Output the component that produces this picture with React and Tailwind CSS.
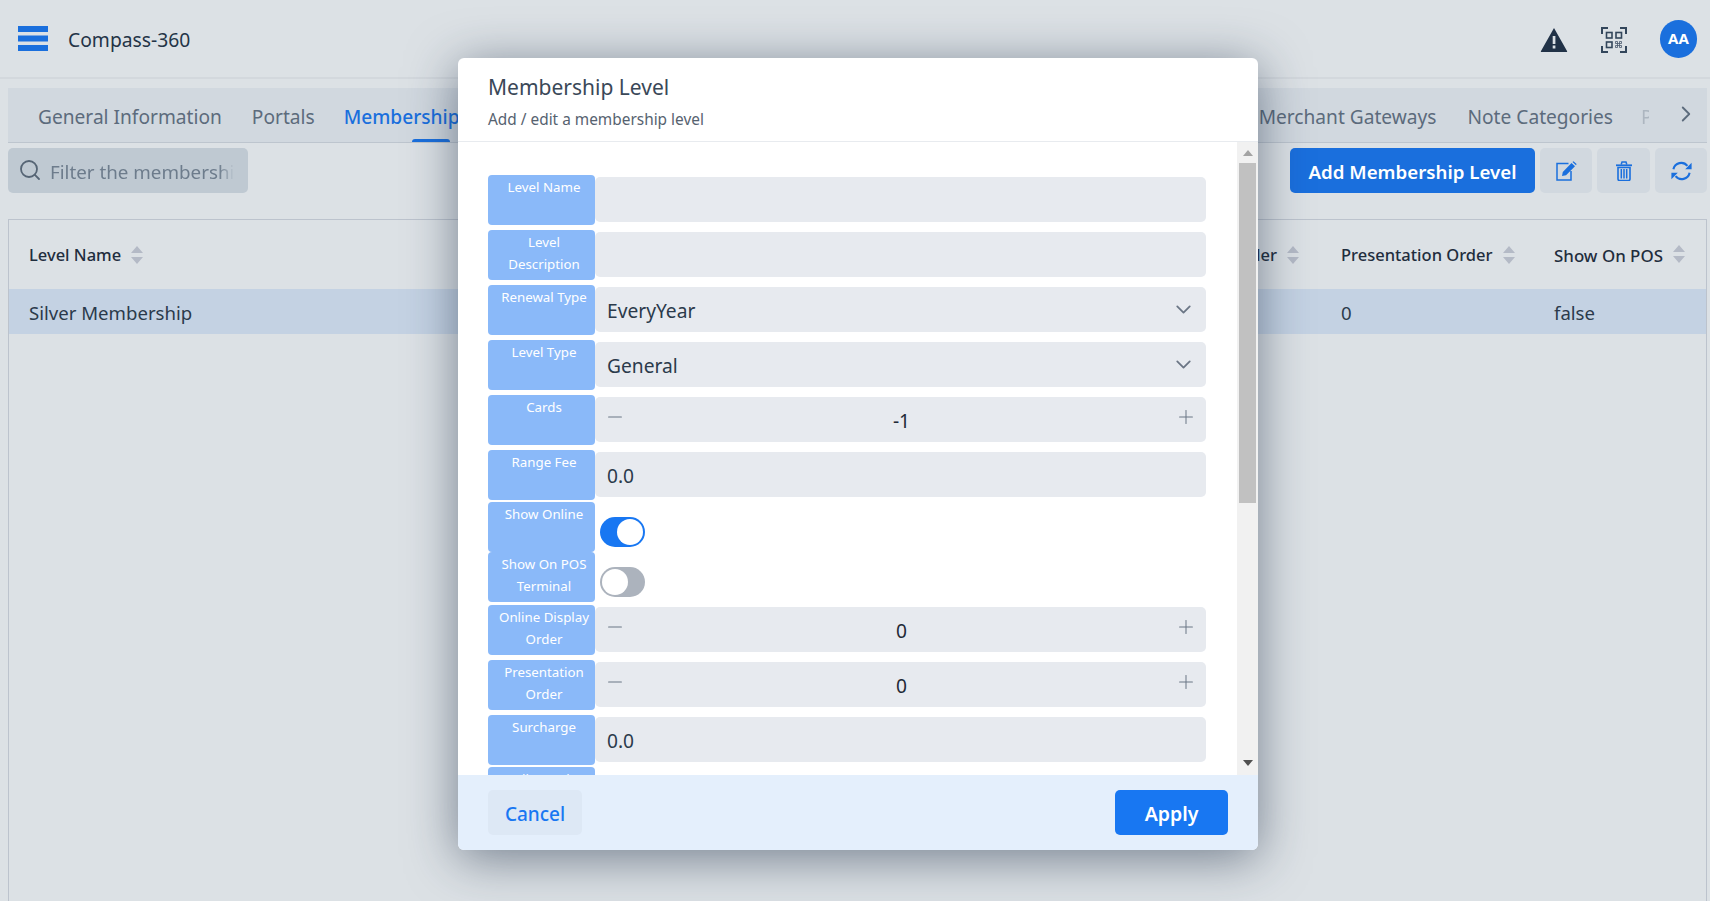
import React from "react";
import { ChevronDown, ChevronRight, Search, Minus, Plus } from "lucide-react";

function Sort() {
  return (
    <svg width="12" height="18" viewBox="0 0 12 18" className="ml-[10px] shrink-0">
      <path d="M6 0 L12 7 H0 Z M6 18 L0 11 H12 Z" fill="#b4bac6" />
    </svg>
  );
}

function Label({ children }) {
  return (
    <div className="w-[107px] h-[50px] shrink-0 rounded-[4px] bg-[#8ab9f9] text-white text-[13.3px] leading-[22px] pl-[5px] pt-[1px] text-center">
      {children}
    </div>
  );
}

function Field({ children }) {
  return (
    <div className="flex-1 h-[45px] mt-[2px] rounded-[5px] bg-[#e7eaef] flex items-center px-3 pt-[4px] text-[19.2px] text-[#2b3a4b]">
      {children}
    </div>
  );
}

function Row({ label, children }) {
  return (
    <div className="flex mb-[5px]">
      <Label>{label}</Label>
      {children}
    </div>
  );
}

function Selector({ value }) {
  return (
    <Field>
      <span className="flex-1">{value}</span>
      <ChevronDown size={25} strokeWidth={1.7} className="text-[#6b7685] -mr-[2px] -mt-[4px]" />
    </Field>
  );
}

function Stepper({ value }) {
  return (
    <Field>
      <Minus size={22} strokeWidth={1.1} className="text-[#6b7685] -ml-[3px] -mt-[10px]" />
      <span className="flex-1 text-center text-[#1f2937] pl-[2px]">{value}</span>
      <Plus size={22} strokeWidth={1.1} className="text-[#6b7685] -mt-[10px] -mr-[3px]" />
    </Field>
  );
}

function Toggle({ on }) {
  return (
    <div className="ml-[5px] mt-[15px] h-[30px] w-[45px] rounded-full flex items-center px-[2px] relative">
      <div className={on ? "w-full h-full absolute inset-0 rounded-full bg-[#1877f2]" : "w-full h-full absolute inset-0 rounded-full bg-[#acb3bd]"} />
      <div className={on ? "relative ml-auto h-[26px] w-[26px] rounded-full bg-white" : "relative h-[26px] w-[26px] rounded-full bg-white"} />
    </div>
  );
}

function IconBtn({ children, w }) {
  return (
    <div className={`h-[45px] ${w} rounded-[5px] bg-[#d1d8df] flex items-center justify-center text-[#1a6fdd]`}>
      {children}
    </div>
  );
}

function EditIcon() {
  return (
    <svg width="21" height="20" viewBox="0 0 21 20" fill="none">
      <path d="M12.5 2.5 H1 V19 H15 V10" stroke="currentColor" strokeWidth="1.5" />
      <path d="M6 15 L6.8 11 L15.5 2 L19 5.2 L10 14.2 Z M16.5 1 L17.5 0.2 L20.6 3 L20 4.2 Z" fill="currentColor" />
    </svg>
  );
}

function TrashIcon() {
  return (
    <svg width="16" height="20" viewBox="0 0 16 20" fill="none">
      <path d="M0 3.4 H16 V5.2 H0 Z" fill="currentColor" />
      <path d="M5.2 3.4 L6 1 H10 L10.8 3.4" stroke="currentColor" strokeWidth="1.5" />
      <path d="M2 6.5 H14 V18 a1.5 1.5 0 0 1 -1.5 1.5 H3.5 a1.5 1.5 0 0 1 -1.5 -1.5 Z" stroke="currentColor" strokeWidth="1.6" />
      <path d="M5.3 8 V17.5 M8 8 V17.5 M10.7 8 V17.5" stroke="currentColor" strokeWidth="1.5" />
    </svg>
  );
}

function SyncIcon() {
  return (
    <svg width="21" height="20" viewBox="0 0 21 20" fill="none">
      <path d="M2.4 8.2 A8 8 0 0 1 16.4 4.8" stroke="currentColor" strokeWidth="2.1" />
      <path d="M18.6 11.8 A8 8 0 0 1 4.6 15.2" stroke="currentColor" strokeWidth="2.1" />
      <path d="M20.6 1.8 V8.2 H14.2 Z M0.4 18.2 V11.8 H6.8 Z" fill="currentColor" />
    </svg>
  );
}

function Page() {
  return (
    <div className="w-[1710px] h-[901px] overflow-hidden bg-[#dce1e5] text-[#1f2d3d]">
      <header className="h-[79px] border-b-2 border-[#d3d8dd] flex items-center pl-[18px] pr-[13px]">
        <svg width="30" height="25" viewBox="0 0 30 25" className="shrink-0">
          <rect x="0" y="0" width="30" height="6" fill="#1a6fdd" />
          <rect x="0" y="9.5" width="30" height="6" fill="#1a6fdd" />
          <rect x="0" y="19" width="30" height="6" fill="#1a6fdd" />
        </svg>
        <div className="ml-[20px] mt-[3px] text-[19.3px] text-[#243447]">Compass-360</div>
        <div className="flex-1" />
        <svg width="28" height="24" viewBox="0 0 28 24" className="mr-[33px] mt-[2px]">
          <path d="M14 0 L27 23 a0.6 0.6 0 0 1 -0.5 1 H1.5 a0.6 0.6 0 0 1 -0.5 -1 Z" fill="#213247" />
          <rect x="12.7" y="8" width="2.7" height="8" fill="#dce1e5" />
          <rect x="12.7" y="17.5" width="2.7" height="3" fill="#dce1e5" />
        </svg>
        <svg width="26" height="26" viewBox="0 0 26 26" fill="none" stroke="#33465b" strokeWidth="1.6" className="mr-[33px] mt-[3px]">
          <path d="M1 7 V1 H7 M19 1 H25 V7 M1 19 V25 H7 M19 25 H25 V19" strokeWidth="2" />
          <rect x="5.5" y="5.5" width="5.5" height="5.5" />
          <rect x="15" y="5.5" width="5.5" height="5.5" />
          <rect x="5.5" y="15" width="5.5" height="5.5" />
          <path d="M14.5 14.5h2v2h-2zM18.5 14.5h2v2h-2zM16.5 16.5h2v2h-2zM14.5 18.5h2v2h-2zM18.5 18.5h2v2h-2z" strokeWidth="0.7" />
        </svg>
        <div className="h-[38px] w-[37px] rounded-full bg-[#1a6fdd] text-white flex items-center justify-center text-[15px] font-bold">AA</div>
      </header>

      <div className="pt-[9px] pl-[8px] pr-[3px]">
        <nav className="h-[55px] bg-[#d1d8df] border-b border-[#bdc5ce] flex items-center pt-[4px] text-[19.15px] text-[#5c6b7c] pl-[30px]">
          <span>General Information</span>
          <span className="ml-[30px]">Portals</span>
          <span className="ml-[29px] text-[#1a6fdd] font-medium relative">
            Membership
            <span className="absolute left-[68px] top-[36px] w-[38px] h-[3px] rounded-t bg-[#1a6fdd]" />
          </span>
          <div className="flex-1" />
          <span className="mr-[1px]">Merchant Gateways</span>
          <span className="ml-[30px]">Note Categories</span>
          <span className="ml-[28px] w-[8px] overflow-hidden opacity-30">P</span>
          <ChevronRight size={26} strokeWidth={1.7} className="ml-[24px] mr-[8px] -mt-[6px] text-[#5c6b7c]" />
        </nav>

        <div className="flex items-center mt-[5px] gap-[5px]">
          <div className="w-[240px] h-[45px] rounded-[5px] bg-[#bfc9d2] flex items-center pl-[10px] text-[18.8px] text-[#6d7c8c] overflow-hidden">
            <Search size={24} strokeWidth={1.8} className="shrink-0 text-[#566575] -mt-[2px]" />
            <span className="ml-[8px] mt-[4px] whitespace-nowrap w-[184px] overflow-hidden [mask-image:linear-gradient(to_right,black_92%,transparent)]">Filter the membership</span>
          </div>
          <div className="flex-1" />
          <div className="w-[245px] h-[45px] rounded-[5px] bg-[#1a6fdd] text-white text-[18.7px] font-semibold flex items-center justify-center pt-[3px]">Add Membership Level</div>
          <IconBtn w="w-[52px]"><EditIcon /></IconBtn>
          <IconBtn w="w-[53px]"><TrashIcon /></IconBtn>
          <IconBtn w="w-[52px]"><SyncIcon /></IconBtn>
        </div>

        <div className="mt-[26px] border-t border-l border-r border-[#bcc3cd] h-[700px]">
          <div className="h-[69px] flex items-center text-[16.5px] font-medium text-[#1f2d3d]">
            <div className="pl-[20px] flex items-center"><span className="mt-[2px]">Level Name</span><Sort /></div>
            <div className="flex-1" />
            <div className="flex items-center mr-[42px]"><span className="mt-[2px]">Online Display Order</span><Sort /></div>
            <div className="flex items-center w-[213px]"><span className="mt-[2px]">Presentation Order</span><Sort /></div>
            <div className="flex items-center w-[152px]"><span className="mt-[2px] text-[16.9px]">Show On POS</span><Sort /></div>
          </div>
          <div className="h-[45px] flex items-center bg-[#c4d2e3] text-[18.6px] text-[#2b3a4b] pt-[3px]">
            <div className="pl-[20px]">Silver Membership</div>
            <div className="flex-1" />
            <div className="w-[213px]">0</div>
            <div className="w-[152px]">false</div>
          </div>
        </div>
      </div>
    </div>
  );
}

function Modal() {
  return (
    <div className="absolute left-[458px] top-[58px] w-[800px] h-[792px] rounded-[6px] bg-white flex flex-col overflow-hidden shadow-[0_8px_50px_rgba(30,45,70,0.55)] text-[#2b3a4b]">
      <div className="h-[84px] shrink-0 border-b border-[#e8ebef] pl-[30px] pt-[13px]">
        <div className="text-[21px] leading-[32px] text-[#3a4858]">Membership Level</div>
        <div className="text-[15.4px] leading-[20px] mt-[7px] text-[#56626f]">Add / edit a membership level</div>
      </div>
      <div className="flex-1 flex min-h-0">
        <div className="flex-1 min-w-0 overflow-hidden pl-[30px] pr-[31px] pt-[33px]">
          <Row label="Level Name"><Field /></Row>
          <Row label="Level Description"><Field /></Row>
          <Row label="Renewal Type"><Selector value="EveryYear" /></Row>
          <Row label="Level Type"><Selector value="General" /></Row>
          <Row label="Cards"><Stepper value="-1" /></Row>
          <div className="flex mb-[2px]"><Label>Range Fee</Label><Field>0.0</Field></div>
          <div className="flex"><Label>Show Online</Label><Toggle on /></div>
          <div className="flex mb-[3px]"><Label>Show On POS Terminal</Label><Toggle /></div>
          <Row label="Online Display Order"><Stepper value="0" /></Row>
          <Row label="Presentation Order"><Stepper value="0" /></Row>
          <div className="flex mb-[2px]"><Label>Surcharge</Label><Field>0.0</Field></div>
          <div className="flex"><Label>Allow Sub</Label></div>
        </div>
        <div className="w-[21px] shrink-0 bg-[#f1f1f1] flex flex-col items-center">
          <div className="h-[21px] flex items-center justify-center shrink-0">
            <svg width="10" height="6" viewBox="0 0 10 6"><path d="M5 0 L10 6 H0 Z" fill="#a3a3a3" /></svg>
          </div>
          <div className="w-[17px] h-[340px] bg-[#c1c1c1]" />
          <div className="flex-1" />
          <div className="h-[21px] flex items-center justify-center shrink-0 pb-[3px]">
            <svg width="10" height="6" viewBox="0 0 10 6"><path d="M5 6 L10 0 H0 Z" fill="#505050" /></svg>
          </div>
        </div>
      </div>
      <div className="h-[75px] shrink-0 bg-[#e4effc] flex items-center justify-between pl-[30px] pr-[30px]">
        <div className="w-[94px] h-[45px] rounded-[5px] bg-[#dde8f5] text-[#1877f2] text-[19px] font-medium flex items-center justify-center pt-[4px]">Cancel</div>
        <div className="w-[113px] h-[45px] rounded-[5px] bg-[#1877f2] text-white text-[19.5px] font-semibold flex items-center justify-center pt-[2px]">Apply</div>
      </div>
    </div>
  );
}

export default function App() {
  return (
    <div className="relative w-[1710px] h-[901px] overflow-hidden font-['Noto_Sans',sans-serif]">
      <Page />
      <Modal />
    </div>
  );
}
